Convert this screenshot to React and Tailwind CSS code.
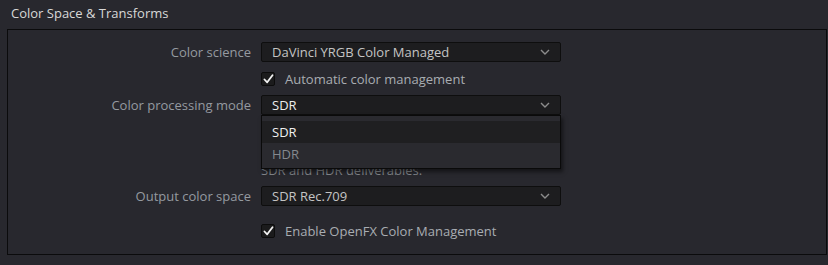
import React from "react";

function Chevron() {
  return (
    <svg width="10" height="6" viewBox="0 0 10 6" className="shrink-0">
      <path d="M1 1 L5 5 L9 1" fill="none" stroke="#8c8c8c" strokeWidth="1.4" />
    </svg>
  );
}

function Select({ value, bright, children }) {
  return (
    <div className="relative w-[300px] h-[20px]">
      <div className="flex items-center justify-between w-full h-full pl-[10px] pr-[10px] bg-[#1d1d1f] border border-[#0e0e0e] rounded-[2px]">
        <span className={bright ? "text-[#ececec]" : "text-[#c4c4c4]"}>{value}</span>
        <Chevron />
      </div>
      {children}
    </div>
  );
}

function Check({ label }) {
  return (
    <div className="flex items-center h-[20px]">
      <div className="w-[14px] h-[14px] bg-[#1b1b1c] border border-[#0c0c0c] rounded-[2px] flex items-center justify-center">
        <svg width="11" height="10" viewBox="0 0 11 10">
          <path d="M1.5 5.5 L4.2 8.3 L9.5 1.2" fill="none" stroke="#f2f2f2" strokeWidth="1.8" strokeLinecap="round" strokeLinejoin="round" />
        </svg>
      </div>
      <span className="ml-[10px] text-[#a9adb2]">{label}</span>
    </div>
  );
}

function Row({ label, children, className = "" }) {
  return (
    <div className={"flex items-center " + className}>
      <div className="w-[243px] text-right text-[#959aa0]">{label}</div>
      <div className="ml-[10px]">{children}</div>
    </div>
  );
}

export default function App() {
  return (
    <div
      className="w-[828px] h-[265px] bg-[#28282e] text-[13px] leading-[20px] overflow-hidden"
      style={{ fontFamily: '"Open Sans", "Noto Sans", sans-serif' }}
    >
      <div className="pl-[11px] pt-[3px] h-[29px] text-[#d8d8d8]">Color Space &amp; Transforms</div>
      <div className="ml-[7px] w-[820px] h-[226px] border border-[#0b0b0c] pt-[12px]">
        <Row label="Color science">
          <Select value="DaVinci YRGB Color Managed" />
        </Row>
        <Row label="" className="mt-[7px]">
          <Check label="Automatic color management" />
        </Row>
        <Row label="Color processing mode" className="mt-[6px] relative z-10">
          <Select value="SDR" bright>
            <div className="absolute left-0 top-[20px] w-[300px] h-[54px] bg-[#2a2a2f] border border-[#0a0a0a] shadow-[2px_3px_4px_rgba(0,0,0,0.5)] pt-[5px]">
              <div className="h-[22px] bg-[#1f1f21] pl-[10px] flex items-center text-[#f0f0f0]">SDR</div>
              <div className="h-[22px] pl-[10px] flex items-center text-[#85898e]">HDR</div>
            </div>
          </Select>
        </Row>
        <div className="ml-[253px] mt-[45px] text-[#85898e]">
          <div>SDR and HDR deliverables.</div>
        </div>
        <Row label="Output color space" className="mt-[6px]">
          <Select value="SDR Rec.709" />
        </Row>
        <Row label="" className="mt-[15px]">
          <Check label="Enable OpenFX Color Management" />
        </Row>
      </div>
    </div>
  );
}
